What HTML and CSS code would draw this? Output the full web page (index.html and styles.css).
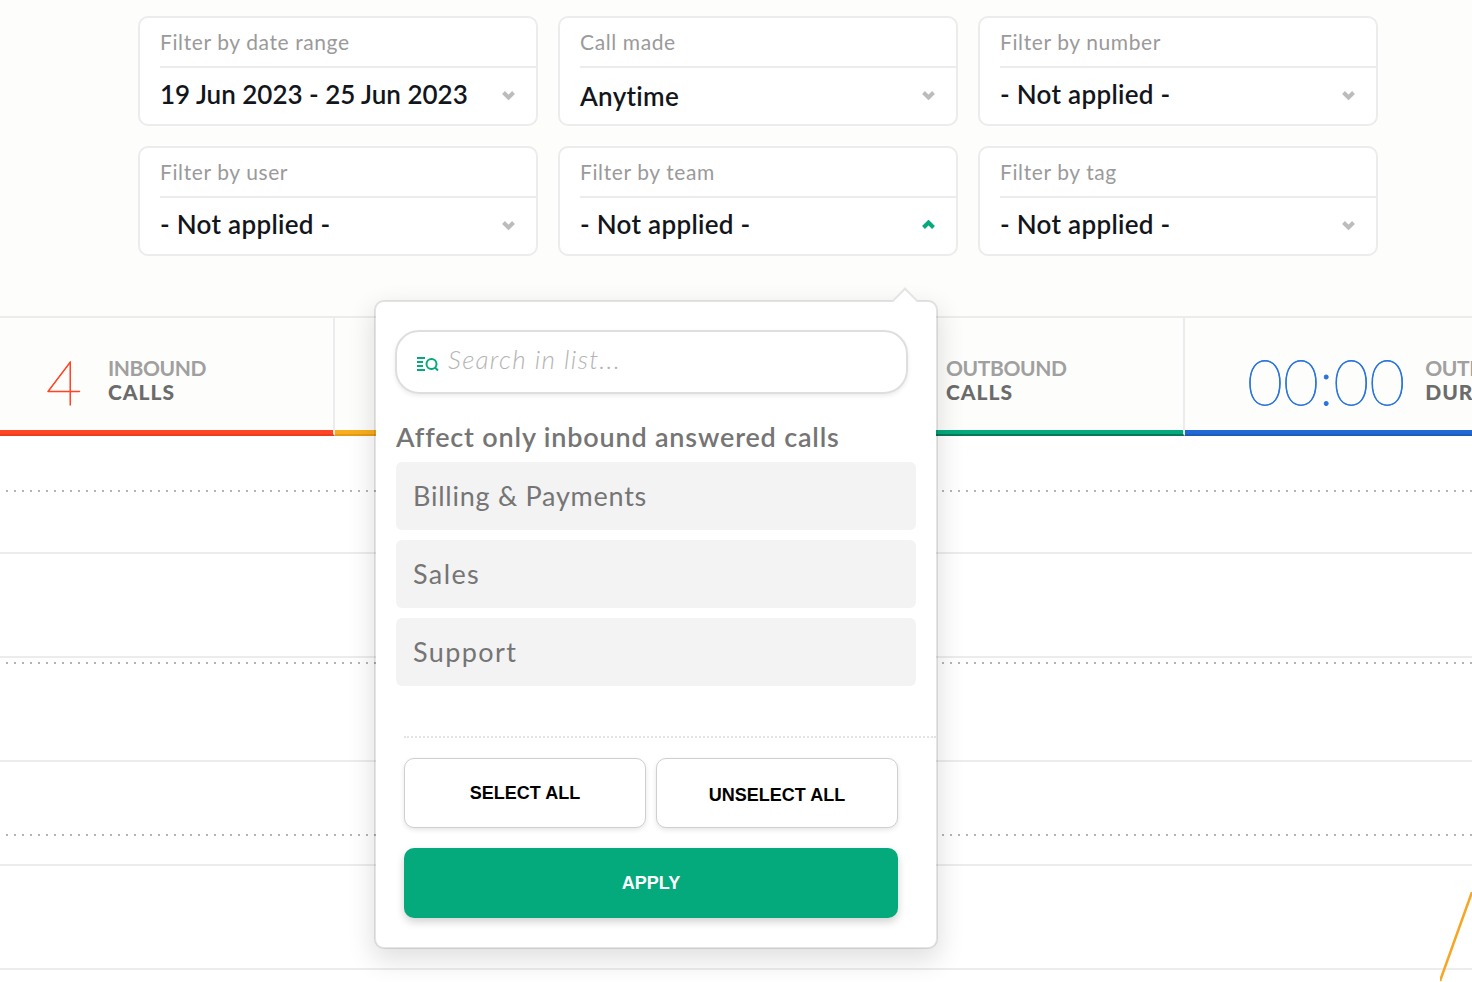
FILE: index.html
```html
<!DOCTYPE html>
<html lang="en">
<head>
<meta charset="utf-8">
<title>Call report filters</title>
<link rel="stylesheet" href="styles.css">
</head>
<body>
<main class="page">
  <section class="top">
    <div class="filters">
      <div class="filter"><div class="filter-label">Filter by date range</div><div class="filter-value date"><span>19 Jun 2023 - 25 Jun 2023</span><svg class="chev" viewBox="0 0 13 10"><path d="M1.500 2.500 6.500 7.500 11.500 2.500"/></svg></div></div>
      <div class="filter"><div class="filter-label">Call made</div><div class="filter-value"><span class="low-text">Anytime</span><svg class="chev" viewBox="0 0 13 10"><path d="M1.500 2.500 6.500 7.500 11.500 2.500"/></svg></div></div>
      <div class="filter"><div class="filter-label">Filter by number</div><div class="filter-value"><span>- Not applied -</span><svg class="chev" viewBox="0 0 13 10"><path d="M1.500 2.500 6.500 7.500 11.500 2.500"/></svg></div></div>
      <div class="filter"><div class="filter-label">Filter by user</div><div class="filter-value"><span>- Not applied -</span><svg class="chev" viewBox="0 0 13 10"><path d="M1.500 2.500 6.500 7.500 11.500 2.500"/></svg></div></div>
      <div class="filter"><div class="filter-label">Filter by team</div><div class="filter-value"><span>- Not applied -</span><svg class="chev open" viewBox="0 0 13 10"><path d="M1.500 7.500 6.500 2.500 11.500 7.500"/></svg></div></div>
      <div class="filter"><div class="filter-label">Filter by tag</div><div class="filter-value"><span>- Not applied -</span><svg class="chev" viewBox="0 0 13 10"><path d="M1.500 2.500 6.500 7.500 11.500 2.500"/></svg></div></div>
    </div>
    <div class="stats">
      <div class="stat stat-in"><span class="stat-num red">4</span><span class="stat-text"><span class="soft">INBOUND</span><br><b>CALLS</b></span></div>
      <div class="stat stat-mid"></div>
      <div class="stat stat-out"><span class="stat-text"><span class="soft">OUTBOUND</span><br><b>CALLS</b></span></div>
      <div class="stat stat-dur"><span class="stat-num blue">00:00</span><span class="stat-text"><span class="soft">OUTBOUND</span><br><b>DURATION</b></span></div>
    </div>
  </section>
  <section class="chart">
    <i class="dots d1"></i><i class="dots d2"></i><i class="dots d3"></i>
    <div class="grid-row"></div><div class="grid-row"></div><div class="grid-row"></div><div class="grid-row"></div><div class="grid-row"></div>
    <svg class="trend" viewBox="0 0 32 90"><path d="M32 0 0 89"/></svg>
  </section>
  <aside class="popover">
    <div class="search"><svg class="search-icon" viewBox="0 0 24 16"><path d="M1 2h8M1 6h6M1 10h6M1 14h8"/><circle cx="15.500" cy="8" r="5"/><path d="m19 11.500 3 3"/></svg><span class="search-text">Search in list...</span></div>
    <h2 class="pop-title">Affect only inbound answered calls</h2>
    <ul class="options"><li>Billing &amp; Payments</li><li class="wide">Sales</li><li class="wide">Support</li></ul>
    <div class="pop-actions">
      <div class="btn-row"><button class="btn">SELECT ALL</button><button class="btn low">UNSELECT ALL</button></div>
      <button class="btn apply">APPLY</button>
    </div>
  </aside>
</main>
</body>
</html>
```
FILE: styles.css
```css
* { box-sizing: border-box; }
html, body { margin: 0; padding: 0; height: 100%; overflow: hidden; }
body { background: #fff; font-family: Lato, "Noto Sans", sans-serif; color: #12161c; }
.page { position: relative; width: 1472px; height: 982px; overflow: hidden; }
.top { height: 436px; background: #fdfdfb; padding-top: 16px; display: flex; flex-direction: column; }
.filters { display: grid; grid-template-columns: repeat(3, 400px); grid-auto-rows: 110px; gap: 20px; margin-left: 138px; }
.filter { background: #fff; border: 2px solid #ececec; border-radius: 10px; padding-left: 20px; display: flex; flex-direction: column; }
.filter-label { height: 50px; border-bottom: 2px solid #ececec; font-size: 21px; line-height: 48px; color: #9a9a9a; letter-spacing: .6px; }
.filter-value { flex: 1; display: flex; align-items: center; justify-content: space-between; padding-right: 21px; font-size: 26px; font-weight: 600; letter-spacing: .3px; padding-bottom: 4px; }
.filter-value.date { letter-spacing: 0; }
.low-text { position: relative; top: 2px; }
.chev { width: 13px; height: 10px; fill: none; stroke: #bcbcbc; stroke-width: 4; position: relative; top: 1px; }
.chev.open { stroke: #04a97c; }
.stats { margin-top: 60px; flex: 1; display: grid; grid-template-columns: 335px 427px 423px 287px; border-top: 2px solid #ececec; }
.stat { border-bottom: 2px solid; border-right: 2px solid #ececec; display: flex; align-items: center; padding-top: 8px; }
.stat-in { border-bottom-color: #f03a1c; box-shadow: inset 0 -4px 0 #ff4526; padding-left: 46px; gap: 26px; }
.stat-mid { border-bottom-color: #e69c14; box-shadow: inset 0 -4px 0 #f9ae1f; }
.stat-out { border-bottom-color: #04795a; box-shadow: inset 0 -4px 0 #04a97c; padding-left: 184px; }
.stat-dur { border-bottom-color: #1f5bb8; box-shadow: inset 0 -4px 0 #2269d8; border-right: 0; padding-left: 62px; gap: 20px; }
.stat-num { font-weight: 200; font-size: 62px; line-height: 1; margin-top: 2px; -webkit-text-stroke: .8px currentColor; }
.red { color: #ff4526; }
.blue { color: #2a74dd; }
.stat-text { font-size: 21px; line-height: 24px; font-weight: 700; white-space: nowrap; }
.soft { color: #a0a0a0; letter-spacing: -.4px; }
.stat-text b { color: #6b6b6b; letter-spacing: 1px; }
.chart { position: relative; height: 546px; padding-top: 14px; }
.grid-row { height: 104px; border-bottom: 2px solid #ececec; }
.dots { position: absolute; left: 6px; right: 0; height: 2px; background: repeating-linear-gradient(90deg, #b4b4b4 0 2px, transparent 2px 8px); }
.d1 { top: 54px; }
.d2 { top: 226px; }
.d3 { top: 398px; }
.trend { position: absolute; right: 0; top: 456px; width: 32px; height: 90px; fill: none; stroke: #f6a623; stroke-width: 2.5; }
.popover { position: absolute; left: 374px; top: 300px; width: 564px; height: 649px; background: #fff; background-clip: padding-box; border: 2px solid rgba(0,0,0,.1); border-radius: 10px; box-shadow: 0 10px 26px 2px rgba(0,0,0,.12); padding: 28px 20px 0 20px; }
.popover::before { content: ""; position: absolute; left: 520px; top: -11px; width: 16px; height: 16px; background: #fff; border-top: 2px solid #e4e4e4; border-left: 2px solid #e4e4e4; transform: rotate(45deg); }
.search { margin-left: -1px; width: 513px; height: 64px; border: 2px solid #dedede; border-radius: 24px; box-shadow: 0 2px 4px rgba(0,0,0,.08); display: flex; align-items: center; gap: 8px; padding-left: 19px; }
.search-text { font-size: 26px; font-style: italic; font-weight: 300; color: #b4b4b4; letter-spacing: 1.3px; margin-bottom: 6px; }
.search-icon { width: 24px; height: 16px; fill: none; stroke: #04a97c; stroke-width: 2; flex: none; margin-top: 3px; }
.pop-title { margin: 23px 0 5px; font-size: 27px; line-height: 40px; font-weight: 600; color: #757575; letter-spacing: .82px; }
.options { list-style: none; margin: 0; padding: 0; display: flex; flex-direction: column; gap: 10px; }
.options li { height: 68px; background: #f3f3f3; border-radius: 6px; padding-left: 17px; font-size: 27px; line-height: 68px; color: #757575; letter-spacing: .75px; }
.options li.wide { letter-spacing: 1.4px; }
.pop-actions { margin: 50px -20px 0 8px; border-top: 2px dotted #e4e4e4; padding-top: 20px; display: flex; flex-direction: column; gap: 20px; }
.btn-row { display: flex; gap: 10px; }
.btn { font-family: "Liberation Sans", Arial, sans-serif; font-weight: 700; font-size: 18px; color: #000; background: #fff; border: 1px solid #cfcfcf; border-radius: 10px; width: 242px; height: 70px; padding: 0; box-shadow: 0 2px 5px rgba(0,0,0,.1); }
.btn.low { padding: 4px 0 0; }
.apply { width: 494px; background: #04a97c; border: 0; color: #fff; box-shadow: 0 4px 8px rgba(0,0,0,.18); }
```
